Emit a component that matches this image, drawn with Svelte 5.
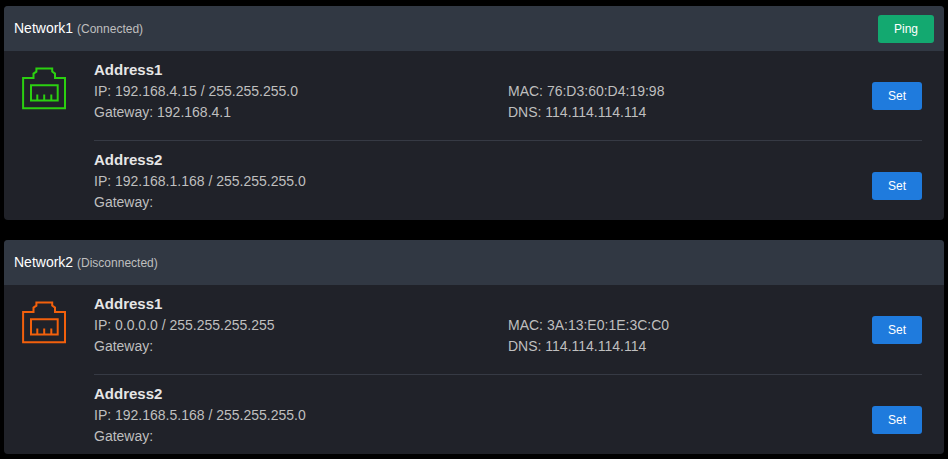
<script lang="ts">
  type Address = { name: string; ip: string; gateway: string; mac?: string; dns?: string };
  type Network = { name: string; connected: boolean; addresses: Address[] };

  let networks: Network[] = $state([
    {
      name: 'Network1',
      connected: true,
      addresses: [
        { name: 'Address1', ip: '192.168.4.15 / 255.255.255.0', gateway: '192.168.4.1', mac: '76:D3:60:D4:19:98', dns: '114.114.114.114' },
        { name: 'Address2', ip: '192.168.1.168 / 255.255.255.0', gateway: '' },
      ],
    },
    {
      name: 'Network2',
      connected: false,
      addresses: [
        { name: 'Address1', ip: '0.0.0.0 / 255.255.255.255', gateway: '', mac: '3A:13:E0:1E:3C:C0', dns: '114.114.114.114' },
        { name: 'Address2', ip: '192.168.5.168 / 255.255.255.0', gateway: '' },
      ],
    },
  ]);
</script>

<div class="page">
  {#each networks as network}
    <section class="card">
      <header>
        <div class="title">{network.name} <small>({network.connected ? 'Connected' : 'Disconnected'})</small></div>
        {#if network.connected}
          <button class="ping">Ping</button>
        {/if}
      </header>
      <div class="body">
        <svg class="port" class:connected={network.connected} width="46" height="44" viewBox="0 0 46 44">
          <path d="M2.1 12H12.5V7.6L15.4 5.6V2.4H31.2V5.6L34 7.6V12H44V42.3H2.1Z" />
          <path d="M10 19.2H36.7V34.5H10Z" />
          <path d="M16.3 28.4V34M23.2 28.4V34M30.3 28.4V34" />
        </svg>
        <div class="addresses">
          {#each network.addresses as address}
            <div class="address">
              <div class="col">
                <h3>{address.name}</h3>
                <p>IP: {address.ip}</p>
                <p>Gateway: {address.gateway}</p>
              </div>
              <div class="col second">
                {#if address.mac}
                  <p>MAC: {address.mac}</p>
                  <p>DNS: {address.dns}</p>
                {/if}
              </div>
              <button>Set</button>
            </div>
          {/each}
        </div>
      </div>
    </section>
  {/each}
</div>

<style>
:global(body){
  background: #000;
}
.page{
  box-sizing: border-box;
  height: 459px;
  padding: 6px 4px 0;
  display: flex;
  flex-direction: column;
  gap: 20px;
  font-family: "Liberation Sans", Arial, sans-serif;
  font-size: 14px;
  line-height: 21px;
  color: #bfbfbf;
}
.card{
  height: 214px;
  border-radius: 4px;
  overflow: hidden;
  background: #202229;
}
header{
  box-sizing: border-box;
  display: flex;
  justify-content: space-between;
  align-items: center;
  height: 45px;
  padding: 0 10px;
  background: #313843;
}
.title{
  color: #fff;
}
small{
  font-size: 12px;
  color: #bfbfbf;
}
.body{
  display: flex;
  padding: 8px 22px 0 17px;
}
.port{
  flex: none;
  margin: 7px 27px 0 0;
  fill: none;
  stroke: #f2600c;
  stroke-width: 2;
}
.port.connected{
  stroke: #2bd010;
}
.addresses{
  flex: 1;
}
.address{
  display: flex;
  height: 81px;
}
.address + .address{
  border-top: 1px solid #363a44;
  padding-top: 8px;
}
.col{
  width: 50%;
}
.second{
  flex: 1;
  padding-top: 22px;
}
h3{
  margin: 0 0 1px;
  font-size: 15px;
  color: #e6e6e6;
}
p{
  margin: 0;
}
button{
  height: 28px;
  margin-top: 23px;
  padding: 0 16px;
  border: 0;
  border-radius: 3px;
  background: #1f7bdd;
  color: #fff;
  font: 12px "Liberation Sans", Arial, sans-serif;
}
.ping{
  margin-top: 0;
  background: #13a970;
}
</style>
